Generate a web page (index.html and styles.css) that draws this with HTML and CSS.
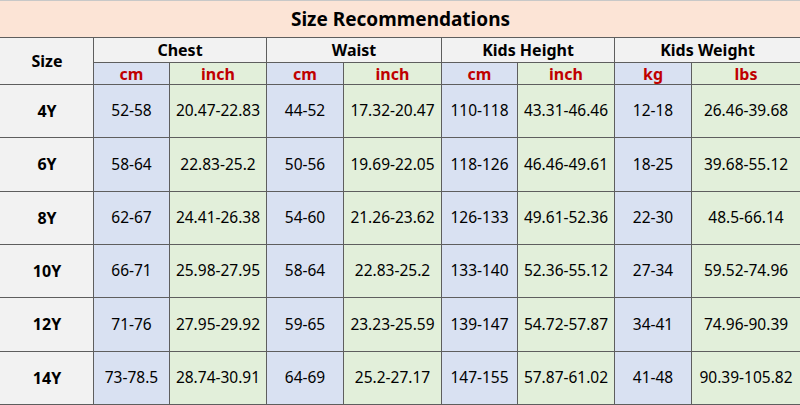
FILE: index.html
```html
<!DOCTYPE html>
<html>
<head>
<meta charset="utf-8">
<link rel="stylesheet" href="styles.css">
</head>
<body>
<table class="size-table">
  <colgroup>
    <col class="c-size"><col class="c1"><col class="c2"><col class="c3"><col class="c4"><col class="c5"><col class="c6"><col class="c7"><col class="c8">
  </colgroup>
  <thead>
    <tr class="r-title"><th colspan="9" class="title">Size Recommendations</th></tr>
    <tr class="r-group">
      <th rowspan="2" class="size-head">Size</th>
      <th colspan="2" class="group">Chest</th>
      <th colspan="2" class="group">Waist</th>
      <th colspan="2" class="group">Kids Height</th>
      <th colspan="2" class="group">Kids Weight</th>
    </tr>
    <tr class="r-unit">
      <th class="unit blue">cm</th><th class="unit green">inch</th>
      <th class="unit blue">cm</th><th class="unit green">inch</th>
      <th class="unit blue">cm</th><th class="unit green">inch</th>
      <th class="unit blue">kg</th><th class="unit green">lbs</th>
    </tr>
  </thead>
  <tbody>
    <tr class="r-data"><th class="size">4Y</th><td class="blue">52-58</td><td class="green">20.47-22.83</td><td class="blue">44-52</td><td class="green">17.32-20.47</td><td class="blue">110-118</td><td class="green">43.31-46.46</td><td class="blue">12-18</td><td class="green">26.46-39.68</td></tr>
    <tr class="r-data"><th class="size">6Y</th><td class="blue">58-64</td><td class="green">22.83-25.2</td><td class="blue">50-56</td><td class="green">19.69-22.05</td><td class="blue">118-126</td><td class="green">46.46-49.61</td><td class="blue">18-25</td><td class="green">39.68-55.12</td></tr>
    <tr class="r-data"><th class="size">8Y</th><td class="blue">62-67</td><td class="green">24.41-26.38</td><td class="blue">54-60</td><td class="green">21.26-23.62</td><td class="blue">126-133</td><td class="green">49.61-52.36</td><td class="blue">22-30</td><td class="green">48.5-66.14</td></tr>
    <tr class="r-data"><th class="size">10Y</th><td class="blue">66-71</td><td class="green">25.98-27.95</td><td class="blue">58-64</td><td class="green">22.83-25.2</td><td class="blue">133-140</td><td class="green">52.36-55.12</td><td class="blue">27-34</td><td class="green">59.52-74.96</td></tr>
    <tr class="r-data"><th class="size">12Y</th><td class="blue">71-76</td><td class="green">27.95-29.92</td><td class="blue">59-65</td><td class="green">23.23-25.59</td><td class="blue">139-147</td><td class="green">54.72-57.87</td><td class="blue">34-41</td><td class="green">74.96-90.39</td></tr>
    <tr class="r-data"><th class="size">14Y</th><td class="blue">73-78.5</td><td class="green">28.74-30.91</td><td class="blue">64-69</td><td class="green">25.2-27.17</td><td class="blue">147-155</td><td class="green">57.87-61.02</td><td class="blue">41-48</td><td class="green">90.39-105.82</td></tr>
  </tbody>
</table>
</body>
</html>
```
FILE: styles.css
```css
html, body {
  margin: 0;
  padding: 0;
  background: #ffffff;
}
body {
  font-family: "Noto Sans", "Open Sans", sans-serif;
  color: #000;
}
.size-table {
  border-collapse: collapse;
  table-layout: fixed;
  width: 800px;
}
.c-size { width: 93px; }
.c1 { width: 76px; }
.c2 { width: 97px; }
.c3 { width: 77px; }
.c4 { width: 98px; }
.c5 { width: 76px; }
.c6 { width: 97px; }
.c7 { width: 77px; }
.c8 { width: 109px; }
.size-table th,
.size-table td {
  border: 1px solid #5e5e5e;
  padding: 0;
  text-align: center;
  vertical-align: middle;
  line-height: 1;
  white-space: nowrap;
}
.title {
  background: #fce4d6;
  font-size: 19px;
  font-weight: 700;
  border-left-color: #fce4d6 !important;
  border-top-color: #c8c8c8 !important;
}
.r-title { height: 37px; }
.r-group { height: 25px; }
.r-unit { height: 22px; }
.r-data { height: 53.33px; }
.size-head,
.group {
  background: #f2f2f2;
  font-size: 16px;
  font-weight: 700;
}
.size-head { border-left-color: #f2f2f2 !important; }
.unit {
  font-size: 16px;
  font-weight: 700;
  color: #c00000;
}
.size {
  background: #f2f2f2;
  font-size: 16px;
  font-weight: 700;
  border-left-color: #f2f2f2 !important;
}
.size-table td {
  font-size: 15.5px;
}
.blue { background: #d9e1f2; }
.green { background: #e2efda; }
```
